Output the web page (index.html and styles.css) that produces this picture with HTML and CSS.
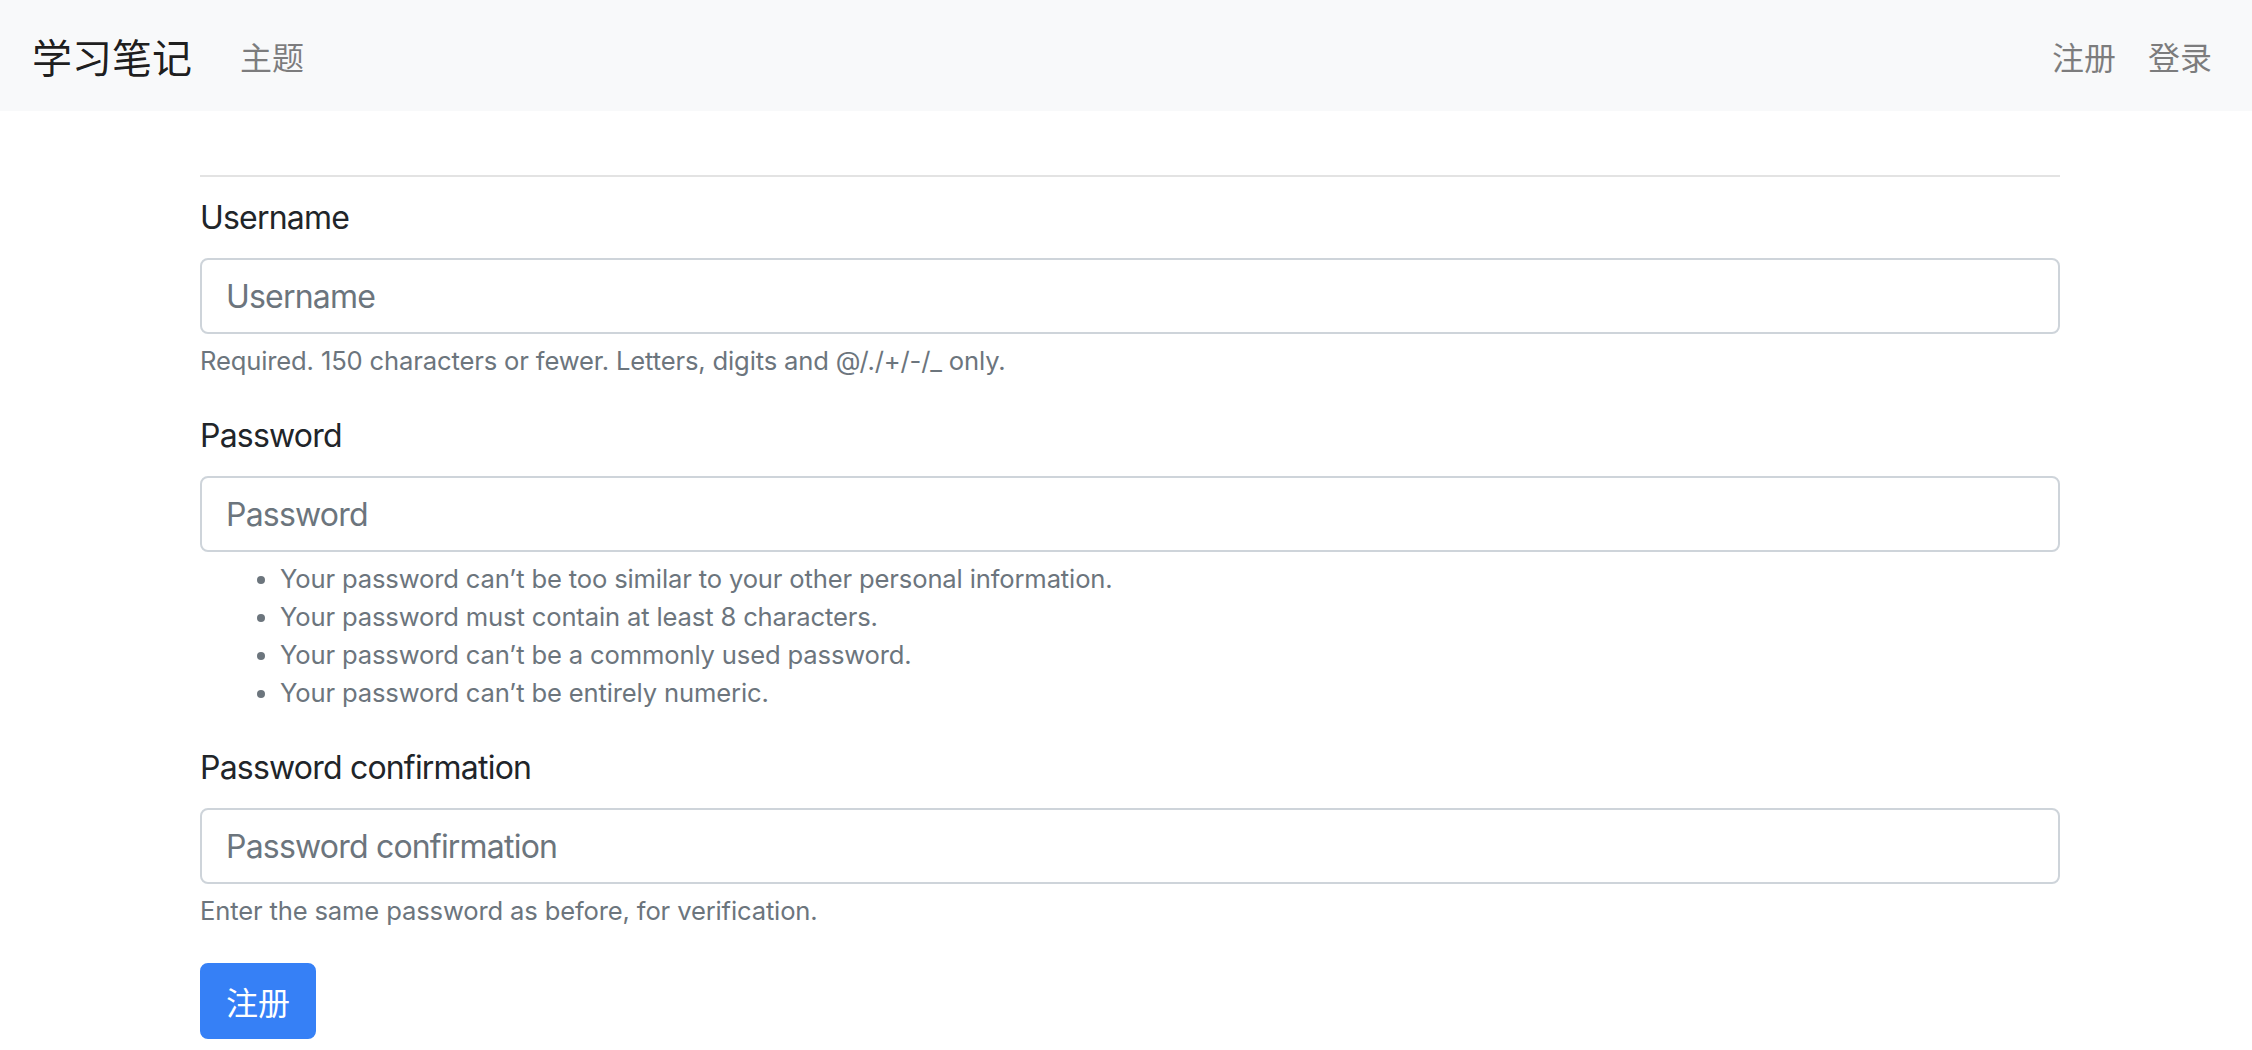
FILE: index.html
```html
<!DOCTYPE html>
<html lang="zh">
<head>
<meta charset="utf-8">
<title>学习笔记</title>
<link rel="stylesheet" href="styles.css">
</head>
<body>
<div class="page">
  <nav class="navbar">
    <a class="brand" href="#">学习笔记</a>
    <ul class="nav">
      <li><a class="nav-link" href="#">主题</a></li>
    </ul>
    <ul class="nav nav-right">
      <li><a class="nav-link" href="#">注册</a></li>
      <li><a class="nav-link" href="#">登录</a></li>
    </ul>
  </nav>
  <main class="container">
    <hr class="divider">
    <form class="register-form">
      <div class="form-group">
        <label class="field-label" for="id_username">Username</label>
        <input class="form-control" type="text" id="id_username" placeholder="Username">
        <small class="form-text">Required. 150 characters or fewer. Letters, digits and @/./+/-/_ only.</small>
      </div>
      <div class="form-group">
        <label class="field-label" for="id_password1">Password</label>
        <input class="form-control" type="password" id="id_password1" placeholder="Password">
        <small class="form-text">
          <ul class="help-list">
            <li>Your password can’t be too similar to your other personal information.</li>
            <li>Your password must contain at least 8 characters.</li>
            <li>Your password can’t be a commonly used password.</li>
            <li>Your password can’t be entirely numeric.</li>
          </ul>
        </small>
      </div>
      <div class="form-group">
        <label class="field-label" for="id_password2">Password confirmation</label>
        <input class="form-control" type="password" id="id_password2" placeholder="Password confirmation">
        <small class="form-text">Enter the same password as before, for verification.</small>
      </div>
      <button class="btn btn-primary" type="submit">注册</button>
    </form>
  </main>
</div>
</body>
</html>
```

FILE: styles.css
```css
html, body {
  margin: 0;
  padding: 0;
  overflow: hidden;
}

body {
  font-family: Inter, "Noto Sans CJK SC", sans-serif;
  font-size: 32px;
  line-height: 1.5;
  color: #212529;
  background: #fff;
}

.page {
  width: 2260px;
}

.navbar {
  display: flex;
  align-items: center;
  box-sizing: border-box;
  height: 111px;
  padding: 0 32px;
  background: #f8f9fa;
}

.brand {
  font-family: "Noto Sans CJK SC", sans-serif;
  font-size: 40px;
  line-height: 60px;
  margin-right: 32px;
  color: rgba(0, 0, 0, 0.9);
  text-decoration: none;
}

.nav {
  display: flex;
  list-style: none;
  margin: 0;
  padding: 0;
}

.nav-right {
  margin-left: auto;
}

.nav-link {
  display: block;
  padding: 16px;
  font-family: "Noto Sans CJK SC", sans-serif;
  font-size: 32px;
  line-height: 48px;
  color: rgba(0, 0, 0, 0.5);
  text-decoration: none;
}

.container {
  width: 1860px;
  margin: 0 auto;
}

.divider {
  height: 0;
  margin: 64px 0 17px;
  border: 0;
  border-top: 2px solid rgba(0, 0, 0, 0.11);
}

.register-form {
  margin: 0;
}

.form-group {
  margin-bottom: 32px;
}

.field-label {
  display: inline-block;
  margin-bottom: 16px;
  letter-spacing: -0.8px;
}

.form-control {
  display: block;
  box-sizing: border-box;
  width: 100%;
  height: 76px;
  margin: 0;
  padding: 12px 24px;
  font-family: inherit;
  font-size: 32px;
  line-height: 48px;
  letter-spacing: -0.8px;
  color: #495057;
  background: #fff;
  border: 2px solid #ced4da;
  border-radius: 8px;
  outline: none;
}

.form-control::placeholder {
  color: #6c757d;
  opacity: 1;
}

.form-text {
  display: block;
  margin-top: 8px;
  font-size: 25.6px;
  line-height: 1.5;
  letter-spacing: -0.15px;
  color: #6c757d;
}

.help-list {
  margin: 0 0 31px;
  padding-left: 80px;
  line-height: 38px;
}

.btn {
  display: inline-block;
  padding: 12px 24px;
  font-family: "Noto Sans CJK SC", sans-serif;
  font-size: 32px;
  line-height: 48px;
  border: 2px solid transparent;
  border-radius: 8px;
  cursor: pointer;
}

.btn-primary {
  color: #fff;
  background: #3680f6;
  border-color: #3680f6;
}
```
